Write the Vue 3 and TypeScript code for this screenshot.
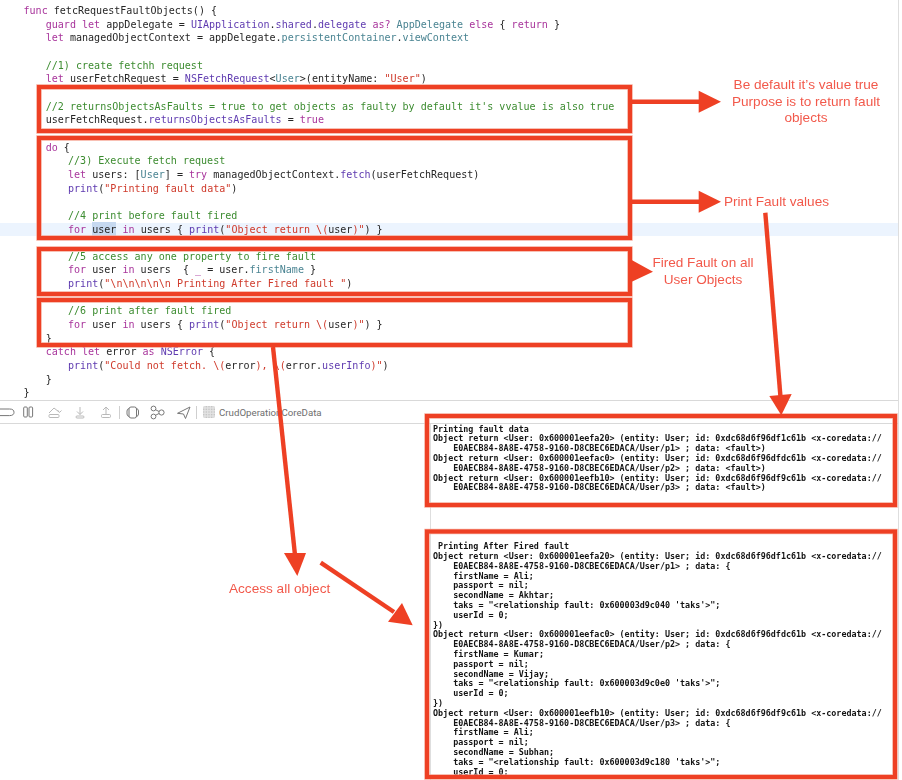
<script setup lang="ts">
type Tok = [string, string];
interface Line { indent: number; toks: Tok[]; current?: boolean }

const code: Line[] = [
  { indent: 0, toks: [['k', 'func'], ['', ' fetcRequestFaultObjects() {']] },
  { indent: 1, toks: [['k', 'guard let'], ['', ' appDelegate = '], ['v', 'UIApplication'], ['', '.'], ['v', 'shared'], ['', '.'], ['v', 'delegate'], ['', ' '], ['k', 'as?'], ['', ' '], ['t', 'AppDelegate'], ['', ' '], ['k', 'else'], ['', ' { '], ['k', 'return'], ['', ' }']] },
  { indent: 1, toks: [['k', 'let'], ['', ' managedObjectContext = appDelegate.'], ['t', 'persistentContainer'], ['', '.'], ['t', 'viewContext']] },
  { indent: 1, toks: [] },
  { indent: 1, toks: [['c', '//1) create fetchh request']] },
  { indent: 1, toks: [['k', 'let'], ['', ' userFetchRequest = '], ['v', 'NSFetchRequest'], ['', '<'], ['t', 'User'], ['', '>(entityName: '], ['s', '"User"'], ['', ')']] },
  { indent: 1, toks: [] },
  { indent: 1, toks: [['c', "//2 returnsObjectsAsFaults = true to get objects as faulty by default it's vvalue is also true"]] },
  { indent: 1, toks: [['', 'userFetchRequest.'], ['v', 'returnsObjectsAsFaults'], ['', ' = '], ['k', 'true']] },
  { indent: 1, toks: [] },
  { indent: 1, toks: [['k', 'do'], ['', ' {']] },
  { indent: 2, toks: [['c', '//3) Execute fetch request']] },
  { indent: 2, toks: [['k', 'let'], ['', ' users: ['], ['t', 'User'], ['', '] = '], ['k', 'try'], ['', ' managedObjectContext.'], ['v', 'fetch'], ['', '(userFetchRequest)']] },
  { indent: 2, toks: [['v', 'print'], ['', '('], ['s', '"Printing fault data"'], ['', ')']] },
  { indent: 2, toks: [] },
  { indent: 2, toks: [['c', '//4 print before fault fired']] },
  { indent: 2, current: true, toks: [['k', 'for'], ['', ' '], ['hl', 'user'], ['', ' '], ['k', 'in'], ['', ' users { '], ['v', 'print'], ['', '('], ['s', '"Object return \\('], ['', 'user'], ['s', ')"'], ['', ') }']] },
  { indent: 2, toks: [] },
  { indent: 2, toks: [['c', '//5 access any one property to fire fault']] },
  { indent: 2, toks: [['k', 'for'], ['', ' user '], ['k', 'in'], ['', ' users  { '], ['k', '_'], ['', ' = user.'], ['t', 'firstName'], ['', ' }']] },
  { indent: 2, toks: [['v', 'print'], ['', '('], ['s', '"\\n\\n\\n\\n\\n Printing After Fired fault "'], ['', ')']] },
  { indent: 2, toks: [] },
  { indent: 2, toks: [['c', '//6 print after fault fired']] },
  { indent: 2, toks: [['k', 'for'], ['', ' user '], ['k', 'in'], ['', ' users { '], ['v', 'print'], ['', '('], ['s', '"Object return \\('], ['', 'user'], ['s', ')"'], ['', ') }']] },
  { indent: 1, toks: [['', '}']] },
  { indent: 1, toks: [['k', 'catch let'], ['', ' error '], ['k', 'as'], ['', ' '], ['v', 'NSError'], ['', ' {']] },
  { indent: 2, toks: [['v', 'print'], ['', '('], ['s', '"Could not fetch. \\('], ['', 'error'], ['s', '), \\('], ['', 'error.'], ['v', 'userInfo'], ['s', ')"'], ['', ')']] },
  { indent: 1, toks: [['', '}']] },
  { indent: 0, toks: [['', '}']] },
];

const uuid = 'E0AECB84-8A8E-4758-9160-D8CBEC6EDACA';
const objLine = (addr: string, id: string) =>
  `Object return <User: ${addr}> (entity: User; id: ${id} <x-coredata://`;
const users = [
  { addr: '0x600001eefa20', id: '0xdc68d6f96df1c61b', p: 'p1', first: 'Ali', second: 'Akhtar', rel: '0x600003d9c040' },
  { addr: '0x600001eefac0', id: '0xdc68d6f96dfdc61b', p: 'p2', first: 'Kumar', second: 'Vijay', rel: '0x600003d9c0e0' },
  { addr: '0x600001eefb10', id: '0xdc68d6f96df9c61b', p: 'p3', first: 'Ali', second: 'Subhan', rel: '0x600003d9c180' },
];

const consoleText = [
  'Printing fault data',
  ...users.flatMap((u) => [objLine(u.addr, u.id), `    ${uuid}/User/${u.p}> ; data: <fault>)`]),
  '', '', '', '', '',
  ' Printing After Fired fault',
  ...users.flatMap((u, i) => {
    const rows = [
      objLine(u.addr, u.id),
      `    ${uuid}/User/${u.p}> ; data: {`,
      `    firstName = ${u.first};`,
      '    passport = nil;',
      `    secondName = ${u.second};`,
      `    taks = "<relationship fault: ${u.rel} 'taks'>";`,
      '    userId = 0;',
    ];
    return i < users.length - 1 ? [...rows, '})'] : rows;
  }),
].join('\n');
</script>

<template>
  <div class="page">
    <div class="workspace">
      <section class="editor">
        <div v-for="(line, i) in code" :key="i" class="line" :class="['in' + line.indent, { current: line.current }]">
          <span v-for="(tok, j) in line.toks" :key="j" :class="tok[0]">{{ tok[1] }}</span>
        </div>
      </section>

      <div class="toolbar">
        <svg class="slot first" viewBox="0 0 14.5 23"><path d="M0 8 H9.5 Q14 8 14 11.3 Q14 14.6 9.5 14.6 H0" /></svg>
        <svg class="slot" viewBox="0 0 26 23"><rect x="8.7" y="6" width="3.6" height="10" rx="1" /><rect x="14" y="6" width="3.6" height="10" rx="1" /></svg>
        <svg class="slot off" viewBox="0 0 26 23"><path d="M8 12 L13 7 L18 11" /><path d="M16.5 9 L18.5 11.5 L20.5 9.5" /><rect x="8" y="13.5" width="10" height="3" rx="1" /></svg>
        <svg class="slot off" viewBox="0 0 26 23"><path d="M13 6 V13.5 M10 10.5 L13 13.5 L16 10.5" /><rect x="9" y="15" width="8" height="2" rx="1" /></svg>
        <svg class="slot off" viewBox="0 0 26 23"><path d="M13 13.5 V6 M10 9 L13 6 L16 9" /><rect x="8.5" y="13.5" width="9" height="3" rx="1" /></svg>
        <i class="sep"></i>
        <svg class="slot narrow" viewBox="0 0 25.5 23"><rect x="9" y="6" width="7.5" height="11" rx="2" /><path d="M9 7.5 Q7 8 7 10 V13 Q7 15 9 15.5 M16.5 7.5 Q18.5 8 18.5 10 V13 Q18.5 15 16.5 15.5" /></svg>
        <svg class="slot narrow" viewBox="0 0 25.5 23"><circle cx="8.5" cy="7.5" r="2.4" /><circle cx="8.5" cy="15.5" r="2.4" /><circle cx="16.5" cy="11.5" r="2.6" /><path d="M10.5 8.7 L14 10.5 M10.5 14.3 L14 12.5" /></svg>
        <svg class="slot narrow" viewBox="0 0 25.5 23"><path d="M19 6 L6.5 12.3 L12.5 13 L14.5 17.5 Z" /></svg>
        <i class="sep"></i>
        <svg class="app" viewBox="0 0 12 12">
          <defs>
            <pattern id="appgrid" width="1.6" height="1.6" patternUnits="userSpaceOnUse">
              <rect width="1.6" height="1.6" fill="#e4e4e4" />
              <rect width="0.8" height="0.8" fill="#bdbdbd" />
            </pattern>
          </defs>
          <rect width="12" height="12" rx="2" fill="url(#appgrid)" />
        </svg>
        <span class="target">CrudOperationCoreData</span>
      </div>

      <div class="lower">
        <div class="vars"></div>
        <pre class="console">{{ consoleText }}</pre>
      </div>
    </div>

    <svg class="marks" viewBox="0 0 902 780">
      <g class="halo">
        <rect x="39" y="87" width="591" height="44" />
        <rect x="39" y="138" width="591" height="100" />
        <rect x="39" y="249" width="591" height="45" />
        <rect x="39" y="300" width="591" height="45" />
        <rect x="427" y="416" width="468" height="89" />
        <rect x="427" y="531.5" width="468" height="245.5" />
      </g>
      <g class="boxes">
        <rect x="39" y="87" width="591" height="44" />
        <rect x="39" y="138" width="591" height="100" />
        <rect x="39" y="249" width="591" height="45" />
        <rect x="39" y="300" width="591" height="45" />
        <rect x="427" y="416" width="468" height="89" />
        <rect x="427" y="531.5" width="468" height="245.5" />
      </g>
      <g class="shafts">
        <path d="M632 101.7 H700" />
        <path d="M632 201.7 H700" />
        <path d="M765.3 212.7 L780.5 397" />
        <path d="M273 347 L295 555" />
        <path d="M320.7 562.7 L394 612" />
      </g>
      <g class="heads">
        <polygon points="698.7,90.7 721,101.7 698.7,112.7" />
        <polygon points="698.7,190.7 721,201.7 698.7,212.7" />
        <polygon points="631.7,260 653,271.7 631.7,281.7" />
        <polygon points="769.3,396 791.7,394 781.3,415.3" />
        <polygon points="284,553 306,553 297.3,576" />
        <polygon points="412.7,625.3 388,621.7 402,603" />
      </g>
    </svg>

    <div class="note note-a">Be default it’s value true<br />Purpose is to return fault<br />objects</div>
    <div class="note note-b">Print Fault values</div>
    <div class="note note-c">Fired Fault on all<br />User Objects</div>
    <div class="note note-d">Access all object</div>
  </div>
</template>

<style scoped>
.page {
  position: relative;
  width: 902px;
  height: 780px;
  overflow: hidden;
  background: #fff;
}
.workspace {
  width: 899px;
  height: 780px;
  display: flex;
  flex-direction: column;
  border-right: 1px solid #dedede;
  box-sizing: border-box;
}
.editor {
  height: 400px;
  padding-top: 4px;
  box-sizing: border-box;
  font-family: "DejaVu Sans Mono", monospace;
  font-size: 10.05px;
  color: #262626;
  filter: blur(0.35px);
}
.line {
  height: 13.66px;
  line-height: 13.66px;
  white-space: pre;
}
.in0 { padding-left: 23.5px; }
.in1 { padding-left: 45.7px; }
.in2 { padding-left: 68px; }
.current { background: #ecf4fe; }
.k { color: #a8349b; }
.c { color: #3c8c30; }
.s { color: #cf3a2b; }
.v { color: #5f3bb0; }
.t { color: #4a8492; }
.hl { background: #c6d9f0; padding: 2px 0; }

.toolbar {
  height: 24px;
  flex: none;
  display: flex;
  align-items: center;
  box-sizing: border-box;
  border-top: 1px solid #d9d9d9;
  border-bottom: 1px solid #d9d9d9;
}
.slot {
  width: 26px;
  height: 23px;
  flex: none;
  fill: none;
  stroke: #777;
  stroke-width: 1;
}
.slot.first { width: 14.5px; }
.slot.narrow { width: 25.5px; }
.slot.off { stroke: #b9b9b9; }
.sep {
  width: 1px;
  height: 13px;
  flex: none;
  background: #cfcfcf;
}
.app {
  width: 12px;
  height: 12px;
  flex: none;
  margin-left: 6px;
}
.target {
  margin-left: 4px;
  font-family: Roboto, "Liberation Sans", sans-serif;
  font-size: 9.7px;
  color: #6e6e6e;
}

.lower {
  flex: 1;
  min-height: 0;
  display: flex;
}
.vars {
  width: 430px;
  flex: none;
  border-right: 1px solid #dedede;
  box-sizing: content-box;
}
.console {
  flex: 1;
  margin: 0;
  padding: 0.7px 0 0 2px;
  overflow: hidden;
  font-family: "DejaVu Sans Mono", monospace;
  font-weight: 700;
  font-size: 8.38px;
  line-height: 9.8px;
  color: #141414;
  filter: blur(0.3px);
}

.marks {
  position: absolute;
  left: 0;
  top: 0;
  width: 902px;
  height: 780px;
  pointer-events: none;
}
.boxes rect { fill: none; stroke: #ee4024; stroke-width: 4; }
.halo rect { fill: none; stroke: #f6a594; stroke-width: 5.4; }
.shafts path { fill: none; stroke: #ee4024; stroke-width: 4.4; }
.heads polygon { fill: #ee4024; }

.note {
  position: absolute;
  font-family: "Liberation Sans", Arial, sans-serif;
  font-size: 13.6px;
  line-height: 16.5px;
  color: #f2594b;
  text-align: center;
  white-space: nowrap;
  filter: blur(0.25px);
}
.note-a { left: 706px; width: 200px; top: 77px; }
.note-b { left: 724px; top: 193.5px; }
.note-c { left: 603px; width: 200px; top: 255px; }
.note-d { left: 229px; top: 581px; }
</style>
